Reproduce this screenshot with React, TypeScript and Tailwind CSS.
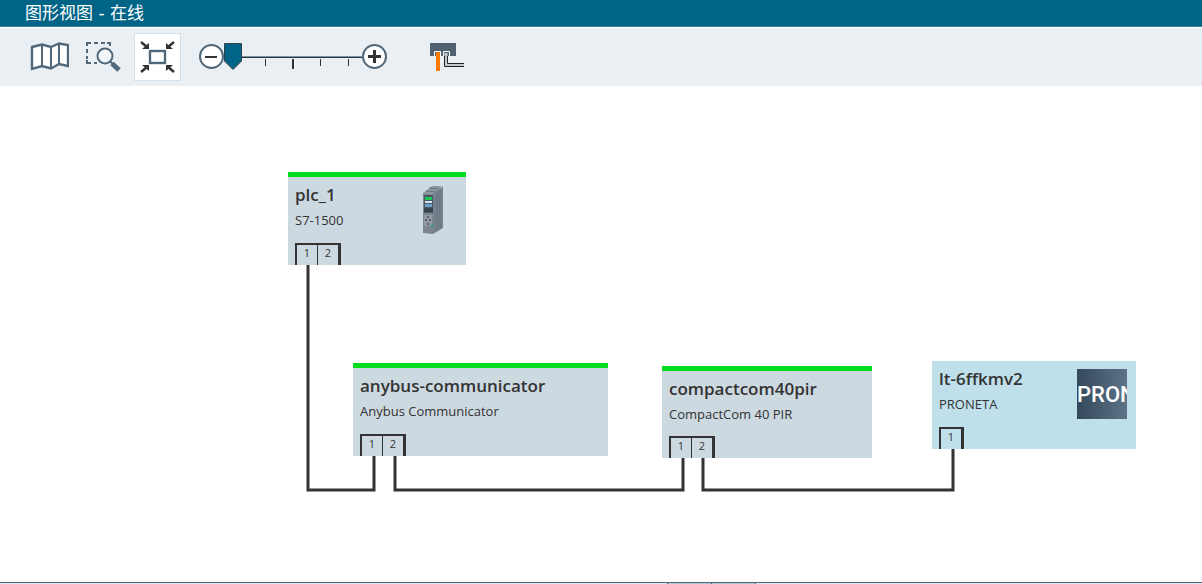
import React, { useState } from 'react'
import clsx from 'clsx'

type Point = [number, number]

interface DeviceNode {
  name: string
  type: string
  x: number
  y: number
  width: number
  height: number
  ports: number[]
  online: boolean
  picture?: React.ReactNode
}

const MapIcon = () => (
  <svg width="39" height="32" viewBox="0 0 39 32" fill="#fff" stroke="#50687a">
    <path strokeWidth="2.4" d="M2 6 L12 3.5 L21 6 L29 2.5 L38 4 V25 L29 23 L21 27.5 L12 25 L2 28 Z" />
    <path strokeWidth="2" d="M12 3.5 V25 M21 6 V27.5 M29 2.5 V23" />
  </svg>
)

const ZoomAreaIcon = () => (
  <svg width="35" height="32" viewBox="0 0 35 32" fill="none" stroke="#50687a">
    <path strokeWidth="2" d="M1 5 V2 H5 M8 2 H12 M15 2 H19 M21 2 H24 V5 M1 8 V12 M1 15 V18 M1 19 V22 H5 M8 22 H11" />
    <circle cx="19" cy="15" r="7.5" strokeWidth="2" fill="#f4f7f9" />
    <path strokeWidth="2" d="M24 20.5 L27 23" />
    <path strokeWidth="5" d="M26 22.5 L33 29" />
  </svg>
)

const FitIcon = () => (
  <svg width="35" height="32" viewBox="0 0 35 32" fill="none">
    <rect x="10" y="10" width="15" height="12" stroke="#50687a" strokeWidth="2.4" fill="#fff" />
    <path stroke="#333" strokeWidth="2.4" d="M1 1 L7 6 M34 1 L28 6 M1 31 L7 26 M34 31 L28 26" />
    <path fill="#333" d="M9 2 V8 H2 Z M26 2 V8 H33 Z M9 30 V24 H2 Z M26 30 V24 H33 Z" />
  </svg>
)

const PortIcon = () => (
  <svg width="36" height="30" viewBox="0 0 36 30" fill="none">
    <rect x="1" y="1" width="26" height="13" fill="#506272" />
    <path stroke="#fff" d="M5.5 14 V9.5 H11.5 V14 M14.5 14 V9.5 H20.5 V14" />
    <rect x="7" y="10" width="4" height="19" fill="#ff7800" />
    <path stroke="#c4c8ca" strokeWidth="3" d="M17 11 V23 H35" />
    <path stroke="#222" d="M15.5 14 V24.5 H35 M18.5 14 V21.5 H35" />
  </svg>
)

const PlcPicture = () => (
  <svg width="22" height="50" viewBox="0 0 22 50" className="mr-3">
    <path fill="#74808c" d="M10 40 V8 L20 2 V43 L10 49 Z" />
    <path fill="#8f9aa5" d="M0 8 L9 1 L20 1 L10 9 Z" />
    <path fill="#7b8691" d="M0 8 L10 9 V49 L0 48 Z" />
    <path stroke="#67727d" d="M3 6 L13 7 M6 3 L16 4 M14 8 V45 M17 5 V43" />
    <path fill="#4b5761" d="M1 10 H10 V28 H1 Z" />
    <path fill="#17c653" d="M2 12 H9 V15 H2 Z" />
    <path fill="#d6e6f0" d="M2 16 H9 V18 H2 Z" />
    <path fill="#6aa2cf" d="M2 19 H9 V22 H2 Z" />
    <path fill="#38434d" d="M1 23 H10 V27 H1 Z" />
    <path fill="#929ba5" d="M1 30 H9 V41 H1 Z" />
    <path fill="#5a6570" d="M4 31 H6 V33 H4 Z M2 34 H4 V36 H2 Z M6 34 H8 V36 H6 Z M4 38 H6 V40 H4 Z" />
    <path fill="#3b9a75" d="M7 42 L10 38 V43 Z" />
  </svg>
)

const PronetaPicture = () => (
  <div className="flex size-[50px] items-center overflow-hidden bg-gradient-to-r from-[#34495b] to-[#5d7488] font-['Roboto',sans-serif] text-[22px] font-medium text-white">
    <span>PRON</span>
  </div>
)

const devices: DeviceNode[] = [
  { name: 'plc_1', type: 'S7-1500', x: 288, y: 86, width: 178, height: 93, ports: [1, 2], online: true, picture: <PlcPicture /> },
  { name: 'anybus-communicator', type: 'Anybus Communicator', x: 353, y: 277, width: 255, height: 93, ports: [1, 2], online: true },
  { name: 'compactcom40pir', type: 'CompactCom 40 PIR', x: 662, y: 280, width: 210, height: 92, ports: [1, 2], online: true },
  { name: 'lt-6ffkmv2', type: 'PRONETA', x: 932, y: 275, width: 204, height: 88, ports: [1], online: false, picture: <PronetaPicture /> },
]

const wires: Point[][] = [
  [[308, 179], [308, 404], [374, 404], [374, 370]],
  [[395, 370], [395, 404], [683, 404], [683, 372]],
  [[703, 372], [703, 404], [953, 404], [953, 363]],
]

function ToolButton({ label, active, children }: { label: string; active?: boolean; children: React.ReactNode }) {
  return (
    <button
      type="button"
      aria-label={label}
      aria-pressed={active}
      className={clsx(
        'flex h-12 w-[47px] shrink-0 items-center justify-center border',
        active ? 'border-[#d3e0ea] bg-white' : 'border-transparent',
      )}
    >
      {children}
    </button>
  )
}

function ZoomSlider() {
  const [zoom, setZoom] = useState(0)
  const step = (by: number) => setZoom((z) => Math.min(100, Math.max(0, z + by)))

  return (
    <div className="flex items-center">
      <button type="button" aria-label="缩小" onClick={() => step(-25)}>
        <svg width="25" height="26" viewBox="0 0 25 26" fill="none">
          <circle cx="12.5" cy="12.5" r="11.5" fill="#fff" stroke="#50687a" strokeWidth="2" />
          <path stroke="#333" strokeWidth="2" d="M6 13 H18" />
        </svg>
      </button>
      <div className="relative h-7 w-[138px]">
        <svg width="138" height="28" viewBox="0 0 138 28">
          <rect x="0" y="13" width="138" height="1" fill="#7d97ab" />
          <rect x="0" y="14" width="138" height="1" fill="#333" />
          <path fill="#333" d="M41 16 H42 V23 H41 Z M68 16 H70 V26 H68 Z M96 16 H97 V23 H96 Z M124 16 H125 V23 H124 Z" />
          <g style={{ transform: `translateX(${zoom * 1.2}px)` }}>
            <path fill="#006487" stroke="#333f4a" d="M0.5 0.5 H17.5 V18 L9 26.5 L0.5 18 Z" />
          </g>
        </svg>
        <input
          type="range"
          aria-label="缩放"
          min={0}
          max={100}
          value={zoom}
          onChange={(e) => setZoom(Number(e.target.value))}
          className="absolute inset-0 size-full cursor-pointer opacity-0"
        />
      </div>
      <button type="button" aria-label="放大" onClick={() => step(25)}>
        <svg width="25" height="26" viewBox="0 0 25 26" fill="none">
          <circle cx="12.5" cy="12.5" r="11.5" fill="#fff" stroke="#50687a" strokeWidth="2" />
          <path stroke="#333" strokeWidth="3" d="M6 12.5 H19 M12.5 6 V19" />
        </svg>
      </button>
    </div>
  )
}

function DeviceCard({ device }: { device: DeviceNode }) {
  return (
    <article
      className={clsx(
        'absolute flex flex-col justify-between pl-[7px] text-[#333]',
        device.online ? 'border-t-5 border-[#00dc1e] bg-[#cdd9e1]' : 'bg-[#bfe0ea]',
      )}
      style={{ left: device.x, top: device.y, width: device.width, minHeight: device.height }}
    >
      <div className="flex items-start justify-between pt-2 pr-[9px]">
        <div className="whitespace-nowrap">
          <h2 className="text-[17px] leading-5 font-semibold">{device.name}</h2>
          <p className="mt-[5px] text-[13px] leading-5">{device.type}</p>
        </div>
        <div className="-mb-2 h-[50px] shrink-0">{device.picture}</div>
      </div>
      <ul className="flex h-[22px] self-start divide-x divide-[#333] border-t-2 border-r-3 border-l-2 border-[#333]">
        {device.ports.map((port) => (
          <li key={port} className="w-[21px] text-center text-[11px] leading-4 last:w-5">
            {port}
          </li>
        ))}
      </ul>
    </article>
  )
}

export default function App() {
  return (
    <div className="flex min-h-screen flex-col bg-white font-['Open_Sans','Noto_Sans','Noto_Sans_CJK_SC',sans-serif]">
      <header className="border-b border-[#3884a0] bg-[#006487] pl-[25px]">
        <h1 className="font-['DejaVu_Sans','Noto_Sans_CJK_SC',sans-serif] text-[17px] leading-[26px] text-white">
          图形视图 - 在线
        </h1>
      </header>

      <div role="toolbar" className="flex items-center border-t border-white bg-[#eaeff3] py-[5px] pl-[26px]">
        <div className="flex gap-[7px]">
          <ToolButton label="概览">
            <MapIcon />
          </ToolButton>
          <ToolButton label="缩放选区">
            <ZoomAreaIcon />
          </ToolButton>
          <ToolButton label="适应窗口" active>
            <FitIcon />
          </ToolButton>
        </div>
        <div className="flex items-center gap-9 pl-[18px]">
          <ZoomSlider />
          <ToolButton label="端口">
            <PortIcon />
          </ToolButton>
        </div>
      </div>

      <main className="relative flex-1 overflow-hidden">
        <svg className="absolute inset-0 size-full" fill="none" stroke="#333" strokeWidth="3">
          {wires.map((points, i) => (
            <polyline key={i} points={points.join(' ')} />
          ))}
        </svg>
        {devices.map((device) => (
          <DeviceCard key={device.name} device={device} />
        ))}
      </main>

      {/* Collapsed bottom panel with its grip */}
      <footer className="flex h-0.5 justify-center border-t border-[#50687a] bg-[#dfe8ef] pl-[220px]">
        <div className="flex w-[89px] divide-x divide-[#50687a] border-x border-[#50687a] bg-[#b4c8d4]">
          <span className="flex-1" />
          <span className="flex-1" />
        </div>
      </footer>
    </div>
  )
}
